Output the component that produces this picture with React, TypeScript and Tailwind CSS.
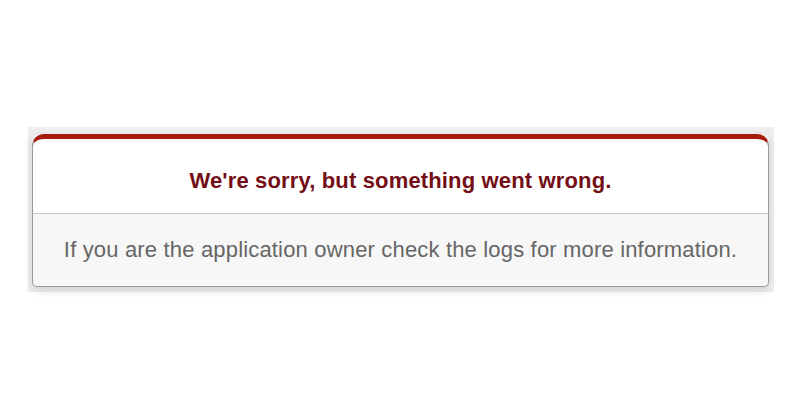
export default function App() {
  return (
    <div className="w-[800px] h-[419px] bg-white pt-[127px]" style={{ fontFamily: '"Liberation Sans", Arial, sans-serif' }}>
      <div className="ml-[28px] w-[746px] h-[165px] bg-[#efefef] pt-[7px] pl-[4px]">
        <div className="w-[737px] shadow-[0_3px_8px_rgba(50,50,50,0.17)] rounded-[6px]">
          <div className="h-[79px] bg-white border-t-[5px] border-t-[#a81c0c] border-x border-x-[#999] rounded-t-[12px] flex items-center justify-center pt-[10px]">
            <h1 className="text-[#730e15] font-bold text-[22px] leading-none tracking-[0.15px]">We&apos;re sorry, but something went wrong.</h1>
          </div>
          <div className="h-[74px] bg-[#f7f7f7] border border-[#999] border-t-[#c8c8c8] rounded-b-[5px] flex items-center justify-center">
            <p className="text-[#666] text-[22px] leading-none tracking-[0.17px]">If you are the application owner check the logs for more information.</p>
          </div>
        </div>
      </div>
    </div>
  );
}
